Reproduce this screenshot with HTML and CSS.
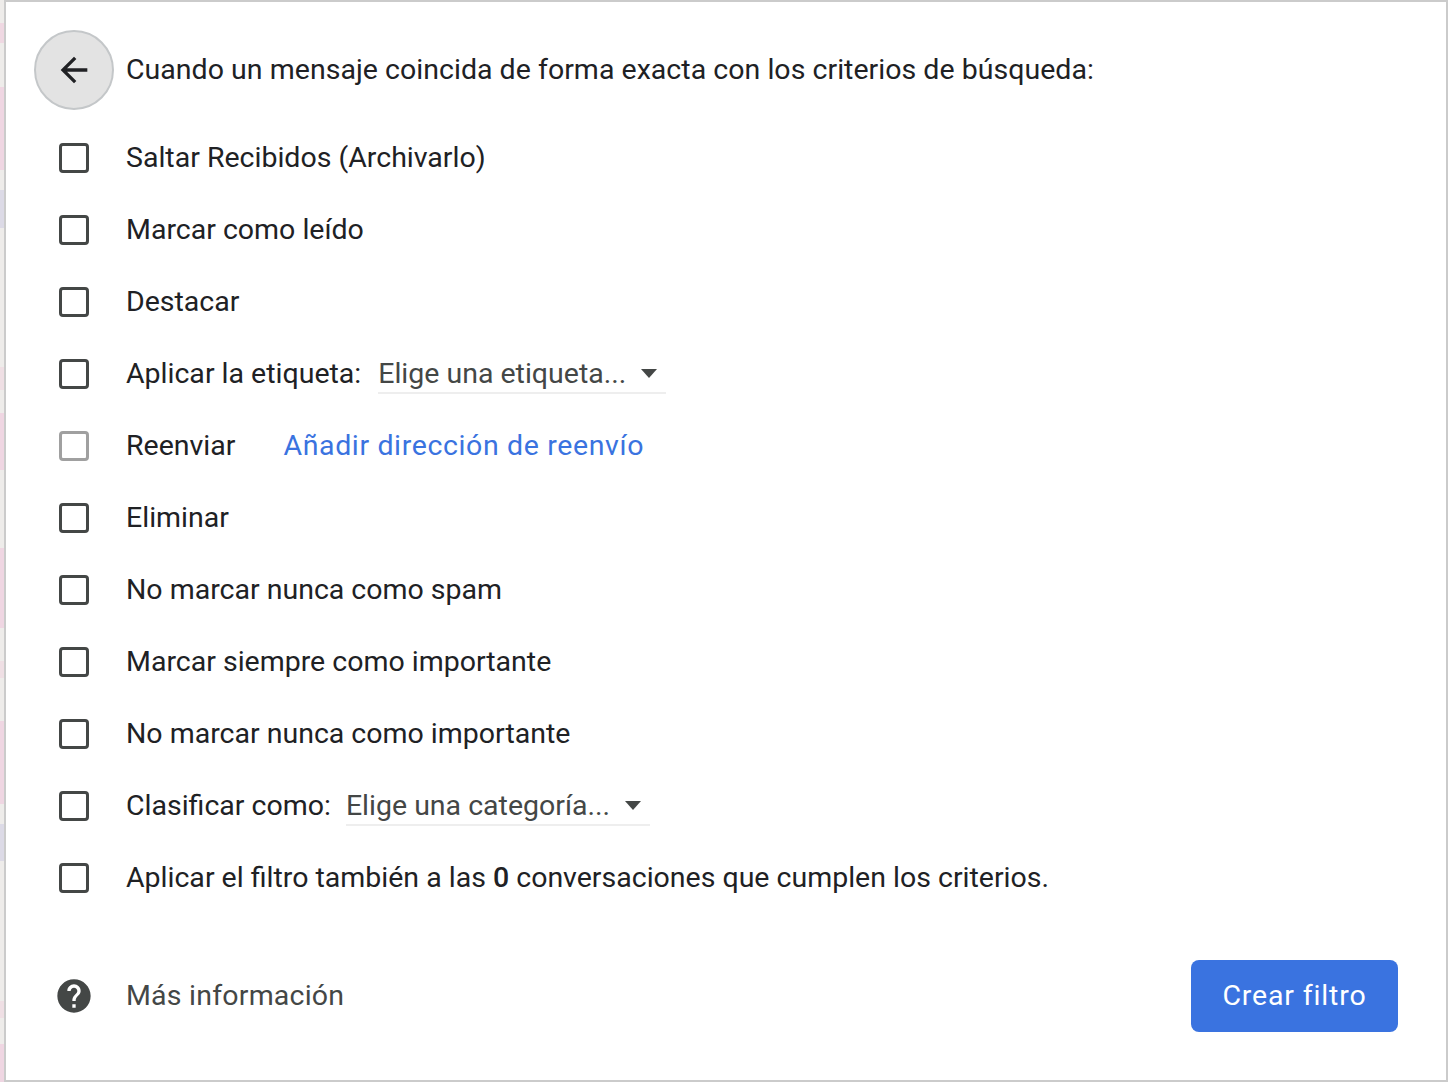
FILE: index.html
```html
<!DOCTYPE html>
<html lang="es">
<head>
<meta charset="utf-8">
<title>Crear filtro</title>
<link rel="stylesheet" href="styles.css">
</head>
<body>
<main class="panel">
  <header class="head">
    <button class="back" aria-label="Atrás">
      <svg width="40" height="40" viewBox="0 0 24 24"><path d="M20 11H7.83l5.59-5.59L12 4l-8 8 8 8 1.41-1.41L7.83 13H20z" fill="#202124"/></svg>
    </button>
    <h1 class="title">Cuando un mensaje coincida de forma exacta con los criterios de búsqueda:</h1>
  </header>
  <ul class="rows">
    <li class="row"><span class="check"></span><span class="text">Saltar Recibidos (Archivarlo)</span></li>
    <li class="row"><span class="check"></span><span class="text">Marcar como leído</span></li>
    <li class="row"><span class="check"></span><span class="text">Destacar</span></li>
    <li class="row"><span class="check"></span><span class="text">Aplicar la etiqueta:</span><span class="select select-label">Elige una etiqueta...<i class="caret"></i></span></li>
    <li class="row"><span class="check check-off"></span><span class="text">Reenviar</span><a class="text link" href="#">Añadir dirección de reenvío</a></li>
    <li class="row"><span class="check"></span><span class="text">Eliminar</span></li>
    <li class="row"><span class="check"></span><span class="text">No marcar nunca como spam</span></li>
    <li class="row"><span class="check"></span><span class="text">Marcar siempre como importante</span></li>
    <li class="row"><span class="check"></span><span class="text">No marcar nunca como importante</span></li>
    <li class="row"><span class="check"></span><span class="text">Clasificar como:</span><span class="select select-cat">Elige una categoría...<i class="caret"></i></span></li>
    <li class="row"><span class="check"></span><span class="text">Aplicar el filtro también a las <b>0</b> conversaciones que cumplen los criterios.</span></li>
  </ul>
  <footer class="foot">
    <svg class="help" width="40" height="40" viewBox="0 0 24 24"><path d="M12 2C6.48 2 2 6.48 2 12s4.48 10 10 10 10-4.48 10-10S17.52 2 12 2zm1 17h-2v-2h2v2zm2.07-7.75l-.9.92C13.45 12.9 13 13.5 13 15h-2v-.5c0-1.1.45-2.1 1.17-2.83l1.24-1.26c.37-.36.59-.86.59-1.41 0-1.1-.9-2-2-2s-2 .9-2 2H8c0-2.21 1.79-4 4-4s4 1.79 4 4c0 .88-.36 1.68-.93 2.25z" fill="#444746"/></svg>
    <a class="more" href="#">Más información</a>
    <button class="create">Crear filtro</button>
  </footer>
</main>
</body>
</html>
```

FILE: styles.css
```css
* { box-sizing: border-box; }
html, body { margin: 0; height: 100%; }
body {
  width: 1448px;
  height: 1082px;
  overflow: hidden;
  background-color: #eeecea;
  background-image: linear-gradient(to bottom,
    #eeecea 23px, #efd8e2 23px, #efd8e2 43px, #eeecea 43px,
    #eeecea 87px, #efd6e2 87px, #efd6e2 170px, #eeecea 170px,
    #eeecea 190px, #dcdae6 190px, #dcdae6 228px, #eeecea 228px,
    #eeecea 367px, #efdfe4 367px, #efdfe4 390px, #eeecea 390px,
    #eeecea 413px, #efd6e2 413px, #efd6e2 470px, #eeecea 470px,
    #eeecea 548px, #efd6e2 548px, #efd6e2 628px, #eeecea 628px,
    #eeecea 661px, #efdfe4 661px, #efdfe4 678px, #eeecea 678px,
    #eeecea 721px, #efd6e2 721px, #efd6e2 804px, #eeecea 804px,
    #eeecea 824px, #dcdae6 824px, #dcdae6 861px, #eeecea 861px,
    #eeecea 1001px, #efdfe4 1001px, #efdfe4 1018px, #eeecea 1018px,
    #eeecea 1044px, #efd6e2 1044px);
  font-family: Roboto, "Noto Sans", sans-serif;
  font-size: 28.5px;
  color: #202124;
}
.panel {
  height: 1082px;
  margin-left: 4px;
  background: #fff;
  border: 2px solid #cbcbcb;
  display: flex;
  flex-direction: column;
}
.head {
  display: flex;
  align-items: center;
  gap: 12px;
  padding: 28px 0 0 28px;
  height: 108px;
}
.back {
  width: 80px;
  height: 80px;
  border-radius: 50%;
  border: 2px solid #c4c7c9;
  background: #e3e3e3;
  padding: 0;
  display: flex;
  align-items: center;
  justify-content: center;
}
.title { margin: 0 0 2px; font: inherit; letter-spacing: 0.03px; }
.rows { list-style: none; margin: 0; padding: 12px 0 0 53px; }
.row {
  height: 72px;
  display: flex;
  align-items: center;
  white-space: nowrap;
}
.text { margin-bottom: 2px; }
.check {
  width: 30px;
  height: 30px;
  border: 3px solid #444746;
  border-radius: 4px;
  margin-right: 37px;
  flex: none;
}
.check-off { border-color: #a0a0a0; }
.row b { font-weight: 500; }
.select {
  display: flex;
  align-items: center;
  height: 40px;
  color: #444746;
  border-bottom: 2px solid #eeeeee;
}
.select-label { width: 288px; margin-left: 17px; }
.select-cat { width: 304px; margin-left: 15px; }
.caret {
  width: 0;
  height: 0;
  margin-left: 15px;
  border-left: 8px solid transparent;
  border-right: 8px solid transparent;
  border-top: 9px solid #444746;
  filter: blur(0.6px);
}
.link {
  color: #3a73e0;
  letter-spacing: 0.63px;
  text-decoration: none;
  margin-left: 48px;
}
.foot {
  display: flex;
  align-items: center;
  margin-top: 46px;
  padding: 0 48px;
}
.help { margin-right: 32px; flex: none; }
.more { color: #444746; letter-spacing: 0.22px; margin-bottom: 2px; text-decoration: none; }
.create {
  margin-left: auto;
  width: 207px;
  height: 72px;
  padding: 0 0 2px;
  border: 0;
  border-radius: 8px;
  background: #3a73e0;
  color: #fff;
  font: inherit;
  letter-spacing: 0.85px;
}
```
